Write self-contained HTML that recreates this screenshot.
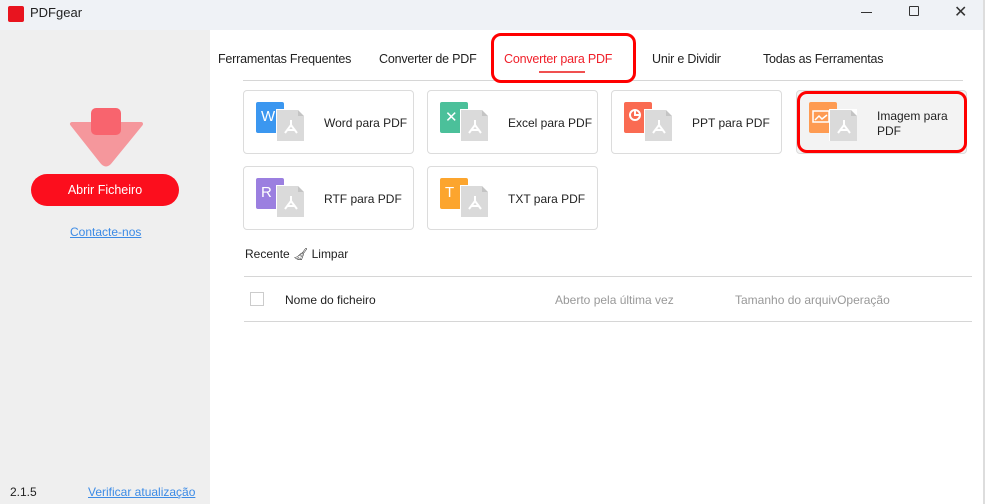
<!DOCTYPE html>
<html><head><meta charset="utf-8"><style>
*{margin:0;padding:0;box-sizing:border-box}
body{width:985px;height:504px;position:relative;overflow:hidden;background:#fff;font-family:"Liberation Sans",sans-serif;font-size:12px;color:#222}
.a{position:absolute}
.title{left:0;top:0;width:985px;height:30px;background:#eff2f6}
.side{left:0;top:30px;width:210px;height:474px;background:#efefef}
.card{position:absolute;width:171px;height:64px;border:1px solid #dcdcdc;border-radius:4px;background:#fff}
.card .ic{position:absolute;left:12px;top:11px;width:28px;height:31px;border-radius:2px;color:#fff;font-size:15px;padding:6px 0 0 5px}
.card .pdf{position:absolute;left:32px;top:18px;width:28px;height:32px;background:#dadada;border-left:1px solid #fff;border-top:1px solid #fff}
.card .pdf:after{content:"";position:absolute;right:0;top:0;border-style:solid;border-width:0 6px 6px 0;border-color:#fff #fff #c4c4c4 #c4c4c4}
.card .pdf svg{position:absolute;left:6px;top:9px}
.card .t{position:absolute;left:80px;top:25px}
.tab{top:52px;font-size:12.5px;letter-spacing:-0.2px}
</style></head><body>
<div class="a title"></div>
<div class="a" style="left:8px;top:6px;width:16px;height:16px;background:#e8141f;border-radius:2px"></div>
<div class="a" style="left:30px;top:5px;font-size:13px">PDFgear</div>
<div class="a" style="left:861px;top:12px;width:11px;height:1px;background:#333"></div>
<div class="a" style="left:909px;top:6px;width:10px;height:10px;border:1px solid #333;border-radius:1px"></div>
<div class="a" style="left:954px;top:2px;font-size:16px;color:#333">✕</div>
<div class="a side"></div>
<svg class="a" style="left:68px;top:107px" width="77" height="60"><path d="M4 17 H73 L42 55 Q38 60 34 55 Z" fill="#f5979c" stroke="#f5979c" stroke-width="4" stroke-linejoin="round"/><rect x="23" y="1" width="30" height="27" rx="5" fill="#f8646e"/></svg>
<div class="a" style="left:31px;top:174px;width:148px;height:32px;border-radius:16px;background:#fc0e1d;color:#fff;text-align:center;line-height:32px;font-size:12.5px">Abrir Ficheiro</div>
<div class="a" style="left:70px;top:225px;color:#3c8be6;text-decoration:underline">Contacte-nos</div>
<div class="a" style="left:10px;top:485px">2.1.5</div>
<div class="a" style="left:88px;top:485px;color:#3c8be6;text-decoration:underline">Verificar atualização</div>

<div class="a tab" style="left:218px">Ferramentas Frequentes</div>
<div class="a tab" style="left:379px">Converter de PDF</div>
<div class="a tab" style="left:504px;color:#f0202a">Converter para PDF</div>
<div class="a tab" style="left:652px">Unir e Dividir</div>
<div class="a tab" style="left:763px">Todas as Ferramentas</div>
<div class="a" style="left:243px;top:80px;width:720px;height:1px;background:#d6d6d6"></div>
<div class="a" style="left:539px;top:71px;width:46px;height:2px;background:#f05050"></div>
<div class="a" style="left:491px;top:33px;width:145px;height:50px;border:3px solid #f00;border-radius:10px"></div>

<div class="card" style="left:243px;top:90px"><div class="ic" style="background:#3b97f0">W</div><div class="pdf"><svg width="16" height="16"><path d="M8 1 L8 6 M8 6 L2 14 M8 6 L14 14 M4 11 H12" stroke="#fff" stroke-width="2" fill="none"/></svg></div><div class="t">Word para PDF</div></div>
<div class="card" style="left:427px;top:90px"><div class="ic" style="background:#4bc09a">✕</div><div class="pdf"><svg width="16" height="16"><path d="M8 1 L8 6 M8 6 L2 14 M8 6 L14 14 M4 11 H12" stroke="#fff" stroke-width="2" fill="none"/></svg></div><div class="t">Excel para PDF</div></div>
<div class="card" style="left:611px;top:90px"><div class="ic" style="background:#fa6b52;padding:0"><svg width="20" height="20" style="position:absolute;left:3px;top:4px"><circle cx="8" cy="9" r="5" stroke="#fff" stroke-width="2" fill="none"/><path d="M8 4 V9 H13" stroke="#fff" stroke-width="2" fill="none"/></svg></div><div class="pdf"><svg width="16" height="16"><path d="M8 1 L8 6 M8 6 L2 14 M8 6 L14 14 M4 11 H12" stroke="#fff" stroke-width="2" fill="none"/></svg></div><div class="t">PPT para PDF</div></div>
<div class="card" style="left:796px;top:90px;background:#f3f3f3"><div class="ic" style="background:#fe9b52;padding:0"><svg width="20" height="16" style="position:absolute;left:3px;top:8px"><rect x="1" y="1" width="16" height="11" stroke="#fff" stroke-width="1.5" fill="none"/><path d="M3 10 L7 6 L10 9 L15 5" stroke="#fff" stroke-width="1.5" fill="none"/></svg></div><div class="pdf"><svg width="16" height="16"><path d="M8 1 L8 6 M8 6 L2 14 M8 6 L14 14 M4 11 H12" stroke="#fff" stroke-width="2" fill="none"/></svg></div><div class="t" style="top:18px;line-height:15px">Imagem para<br>PDF</div></div>
<div class="a" style="left:797px;top:91px;width:170px;height:62px;border:3px solid #f00;border-radius:10px"></div>
<div class="card" style="left:243px;top:166px"><div class="ic" style="background:#9b7fe0">R</div><div class="pdf"><svg width="16" height="16"><path d="M8 1 L8 6 M8 6 L2 14 M8 6 L14 14 M4 11 H12" stroke="#fff" stroke-width="2" fill="none"/></svg></div><div class="t">RTF para PDF</div></div>
<div class="card" style="left:427px;top:166px"><div class="ic" style="background:#fca52e">T</div><div class="pdf"><svg width="16" height="16"><path d="M8 1 L8 6 M8 6 L2 14 M8 6 L14 14 M4 11 H12" stroke="#fff" stroke-width="2" fill="none"/></svg></div><div class="t">TXT para PDF</div></div>

<div class="a" style="left:245px;top:247px">Recente <span style="font-size:12px">🧹︎</span> Limpar</div>
<div class="a" style="left:244px;top:276px;width:728px;height:1px;background:#d6d6d6"></div>
<div class="a" style="left:250px;top:292px;width:14px;height:14px;border:1px solid #ccc"></div>
<div class="a" style="left:285px;top:293px">Nome do ficheiro</div>
<div class="a" style="left:555px;top:293px;color:#999">Aberto pela última vez</div>
<div class="a" style="left:735px;top:293px;color:#999">Tamanho do arquivOperação</div>
<div class="a" style="left:244px;top:321px;width:728px;height:1px;background:#d6d6d6"></div>
<div class="a" style="left:983px;top:0;width:2px;height:504px;background:#ddd"></div>
</body></html>
